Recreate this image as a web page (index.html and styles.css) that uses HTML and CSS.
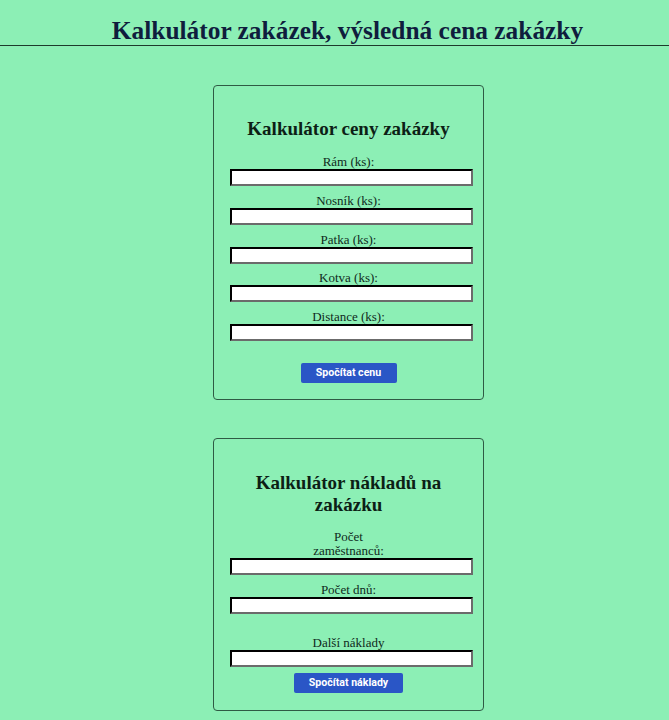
FILE: index.html
```html
<!DOCTYPE html>
<html lang="cs">
<head>
<meta charset="utf-8">
<title>Kalkulátor zakázek</title>
<link rel="stylesheet" href="styles.css">
</head>
<body>
<header class="header">
  <h1 class="page-title">Kalkulátor zakázek, výsledná cena zakázky</h1>
</header>
<main class="main">
  <section class="card card-price">
    <h2 class="card-title">Kalkulátor ceny zakázky</h2>
    <div class="field"><label class="label">Rám (ks):</label><input class="input" type="text"></div>
    <div class="field"><label class="label">Nosník (ks):</label><input class="input" type="text"></div>
    <div class="field"><label class="label">Patka (ks):</label><input class="input" type="text"></div>
    <div class="field"><label class="label">Kotva (ks):</label><input class="input" type="text"></div>
    <div class="field"><label class="label">Distance (ks):</label><input class="input" type="text"></div>
    <button class="btn btn-price" type="button">Spočítat cenu</button>
  </section>
  <section class="card card-cost">
    <h2 class="card-title card-title-narrow">Kalkulátor nákladů na zakázku</h2>
    <div class="field"><label class="label label-narrow">Počet zaměstnanců:</label><input class="input" type="text"></div>
    <div class="field"><label class="label">Počet dnů:</label><input class="input" type="text"></div>
    <div class="field field-spaced"><label class="label">Další náklady</label><input class="input" type="text"></div>
    <button class="btn btn-cost" type="button">Spočítat náklady</button>
  </section>
</main>
</body>
</html>
```
FILE: styles.css
```css
html, body {
  margin: 0;
  padding: 0;
}
body {
  background: #8cefb5;
  font-family: "Liberation Serif", "Times New Roman", serif;
  color: #0d2a1c;
  width: 669px;
  min-height: 720px;
}
.header {
  border-bottom: 1px solid #1d3a2c;
  height: 46px;
  box-sizing: border-box;
  display: flex;
  justify-content: center;
  padding-left: 26px;
}
.page-title {
  margin: 0;
  padding-top: 16px;
  font-size: 25.4px;
  line-height: 29px;
  font-weight: bold;
  color: #0f1d3d;
}
.main {
  display: flex;
  flex-direction: column;
  align-items: center;
  padding-left: 28px;
  padding-top: 39px;
  gap: 38px;
}
.card {
  width: 271px;
  box-sizing: border-box;
  border: 1px solid #2f5a44;
  border-radius: 4px;
  padding: 0 16px;
  display: flex;
  flex-direction: column;
  align-items: center;
}
.card-price {
  height: 315px;
  padding-top: 32px;
}
.card-cost {
  height: 273px;
  padding-top: 33px;
}
.card-title {
  margin: 0 0 14px;
  font-size: 19px;
  line-height: 22px;
  font-weight: bold;
  text-align: center;
  color: #0c1f16;
}
.card-title-narrow {
  width: 200px;
  margin-bottom: 14px;
}
.field {
  display: flex;
  flex-direction: column;
  align-items: center;
  width: 100%;
  margin-bottom: 6.75px;
}
.field-spaced {
  margin-top: 14px;
  margin-bottom: 6px;
}
.label {
  font-size: 13px;
  line-height: 15px;
  color: #0f2a1c;
  text-align: center;
}
.label-narrow {
  width: 90px;
  line-height: 14px;
  margin-top: 0;
}
.input {
  align-self: flex-start;
  width: 243px;
  height: 17px;
  flex-shrink: 0;
  box-sizing: border-box;
  border: 2px inset #767676;
  border-top-color: #0e1a14;
  border-left-color: #0e1a14;
  border-right-color: #6b6b6b;
  border-bottom-color: #6b6b6b;
  background: #ffffff;
  padding: 0 2px;
  margin: 0;
  font-size: 12px;
}
.btn {
  background: #2a56c6;
  color: #ffffff;
  border: none;
  border-radius: 2px;
  font-family: Roboto, "Liberation Sans", Arial, sans-serif;
  font-weight: bold;
  font-size: 10.6px;
  height: 20px;
  padding: 0;
  cursor: pointer;
}
.btn-price {
  width: 96px;
  margin-top: 15px;
}
.btn-cost {
  width: 109px;
}
```
